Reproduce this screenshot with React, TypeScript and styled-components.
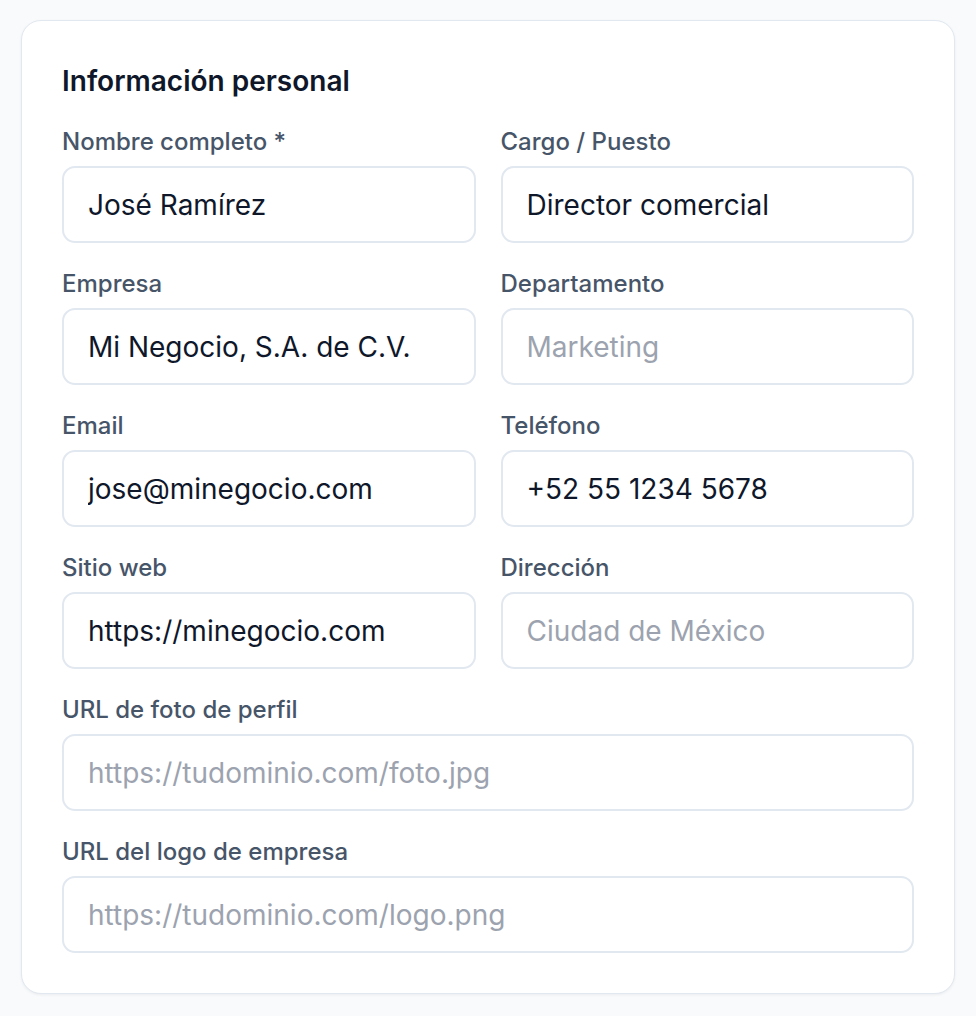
import React from 'react'
import styled, { createGlobalStyle } from 'styled-components'

const GlobalStyle = createGlobalStyle`
  html, body {
    margin: 0;
    padding: 0;
    background: #f8fafc;
    font-family: Inter, 'Noto Sans', sans-serif;
  }
  * { box-sizing: border-box; }
`

const Page = styled.div`
  padding: 20px 21px;
`

const Card = styled.section`
  background: #ffffff;
  border: 1px solid #e2e8f0;
  border-radius: 20px;
  box-shadow: 0 1px 3px rgba(15, 23, 42, 0.06);
  padding: 40px;
`

const Title = styled.h2`
  margin: 0 0 25px;
  font-size: 28px;
  line-height: 40px;
  font-weight: 600;
  color: #0f172a;
`

const Grid = styled.div`
  display: grid;
  grid-template-columns: 1fr 1fr;
  column-gap: 25px;
  row-gap: 25px;
`

const Field = styled.label<{ $full?: boolean }>`
  display: flex;
  flex-direction: column;
  gap: 9px;
  grid-column: ${(p) => (p.$full ? '1 / -1' : 'auto')};
`

const Label = styled.span`
  font-size: 24px;
  line-height: 31px;
  font-weight: 500;
  color: #475569;
`

const Input = styled.input`
  height: 77px;
  width: 100%;
  padding: 0 24px;
  border: 2px solid #e2e8f0;
  border-radius: 13px;
  background: #ffffff;
  font-family: inherit;
  font-size: 28px;
  color: #0f172a;
  outline: none;

  &::placeholder {
    color: #9ca3af;
  }
`

type FieldDef = {
  label: string
  value?: string
  placeholder?: string
  full?: boolean
}

const fields: FieldDef[] = [
  { label: 'Nombre completo *', value: 'José Ramírez' },
  { label: 'Cargo / Puesto', value: 'Director comercial' },
  { label: 'Empresa', value: 'Mi Negocio, S.A. de C.V.' },
  { label: 'Departamento', placeholder: 'Marketing' },
  { label: 'Email', value: 'jose@minegocio.com' },
  { label: 'Teléfono', value: '+52 55 1234 5678' },
  { label: 'Sitio web', value: 'https://minegocio.com' },
  { label: 'Dirección', placeholder: 'Ciudad de México' },
  { label: 'URL de foto de perfil', placeholder: 'https://tudominio.com/foto.jpg', full: true },
  { label: 'URL del logo de empresa', placeholder: 'https://tudominio.com/logo.png', full: true },
]

export default function App() {
  return (
    <>
      <GlobalStyle />
      <Page>
        <Card>
          <Title>Información personal</Title>
          <Grid>
            {fields.map((f) => (
              <Field key={f.label} $full={f.full}>
                <Label>{f.label}</Label>
                <Input defaultValue={f.value} placeholder={f.placeholder} />
              </Field>
            ))}
          </Grid>
        </Card>
      </Page>
    </>
  )
}
